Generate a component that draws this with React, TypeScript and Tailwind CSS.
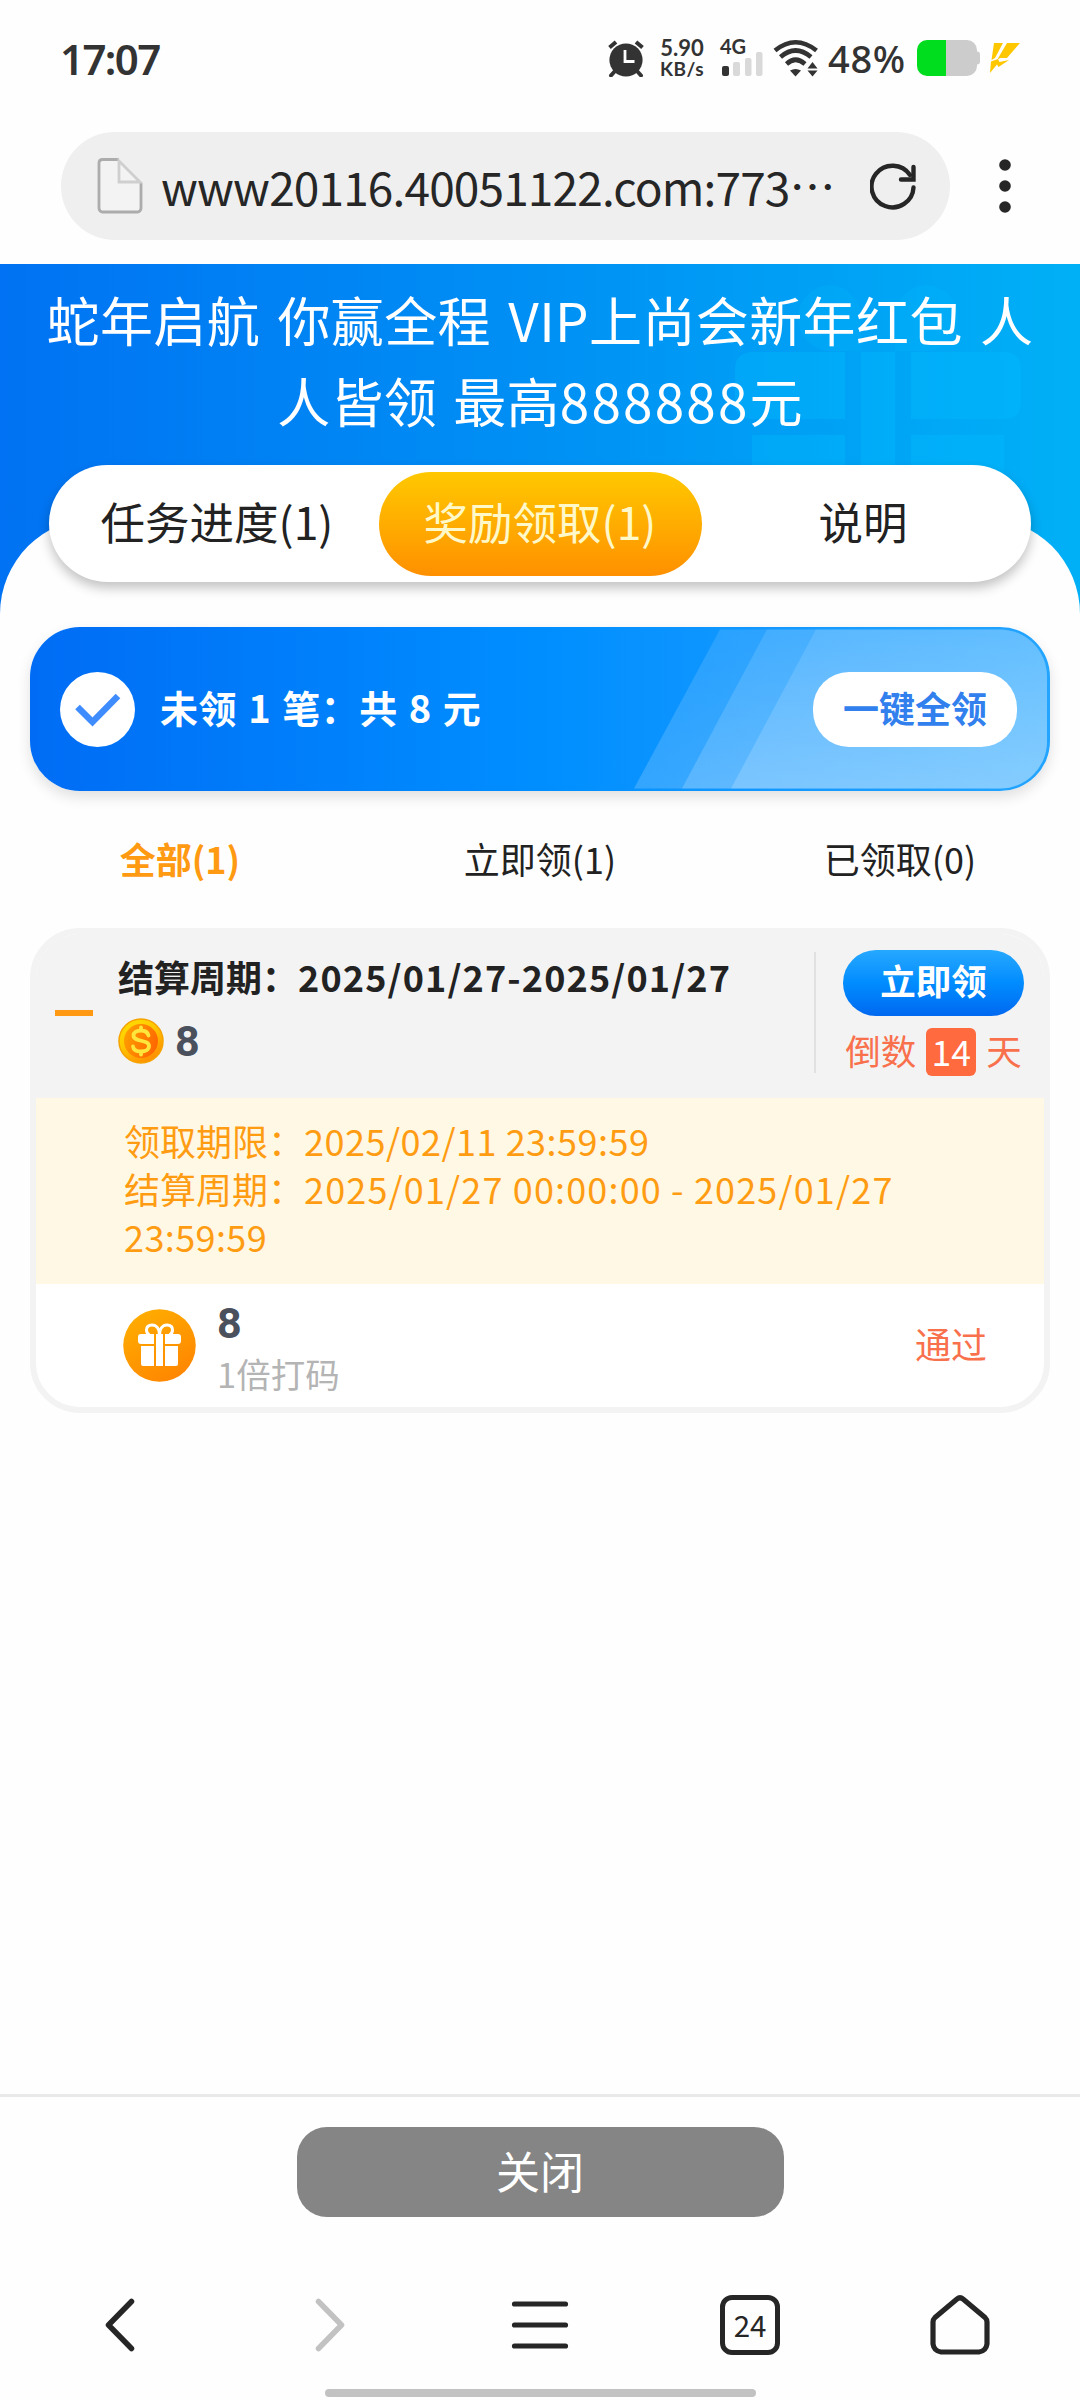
import { useState } from 'react'

interface Reward {
  id: number
  period: string
  amount: number
  daysLeft: number
  deadline: string
  periodStart: string
  periodEnd: string
  turnover: string
  status: string
}

const tabs = ['任务进度(1)', '奖励领取(1)', '说明']
const filters = ['全部(1)', '立即领(1)', '已领取(0)']

const rewards: Reward[] = [
  {
    id: 1,
    period: '2025/01/27-2025/01/27',
    amount: 8,
    daysLeft: 14,
    deadline: '2025/02/11 23:59:59',
    periodStart: '2025/01/27 00:00:00 - 2025/01/27',
    periodEnd: '23:59:59',
    turnover: '1倍打码',
    status: '通过'
  }
]

function StatusIcons() {
  return (
    <div className="flex items-center h-[44px] text-[#333]">
      {/* Alarm */}
      <svg width="38" height="38" viewBox="0 0 38 38" fill="none" stroke="currentColor">
        <circle cx="19" cy="21" r="16.6" fill="currentColor" stroke="none" />
        <path d="M2.5 8.5 9 3M35.500 8.500 29 3" strokeWidth="4" />
        <path d="m8 32-4 4.500M30 32l4 4.500" strokeWidth="4" strokeLinecap="round" />
        <path d="M18 11v11.500h9.500" stroke="#fff" strokeWidth="2.800" />
      </svg>
      <div className="ml-[14px] w-[46px] font-['Lato',sans-serif] font-bold text-center whitespace-nowrap">
        <div className="text-[22px] leading-[21px]">5.90</div>
        <div className="text-[19px] leading-[21px] tracking-[0.5px]">KB/s</div>
      </div>
      {/* Signal */}
      <svg className="ml-[14px]" width="46" height="52" viewBox="-1 -6 46 52">
        <text x="0" y="16" fontSize="20" fontWeight="700" fontFamily="Lato, sans-serif" fill="#333">4G</text>
        <rect x="2" y="28" width="7" height="10" rx="2" fill="#333" />
        <rect x="13" y="24" width="7" height="14" rx="2" fill="#d9d9d9" />
        <rect x="25" y="20" width="6.500" height="18" rx="2" fill="#d9d9d9" />
        <rect x="36" y="14" width="6.500" height="24" rx="2" fill="#d9d9d9" />
      </svg>
      {/* Wifi */}
      <svg className="ml-[8px]" width="46" height="40" viewBox="0 0 46 40" fill="none" stroke="#333">
        <path d="M2 12.500Q22.500-4 43.500 12.500M7.500 19Q22.500 6 38 19M13.500 26Q22.500 17.500 32 26" strokeWidth="4.600" />
        <path d="M22.500 38.500 17 32.500Q22.500 29.500 28 32.500Z" fill="#333" stroke="none" />
        <path d="m34.500 30.500 5-6.500 5 6.500ZM34.500 32.500l5 6 5-6Z" fill="#333" stroke="none" />
      </svg>
      <span className="ml-[9px] w-[81px] font-['Noto_Sans',sans-serif] font-medium text-[38px] leading-[44px] tracking-[0.7px]">48%</span>
      {/* Battery */}
      <svg className="ml-[8px]" width="64" height="38" viewBox="0 0 64 38">
        <path d="M10 1h40a10 10 0 0 1 10 10v1.500q3 0 3 3v7q0 3-3 3V27a10 10 0 0 1-10 10H29V1Z" fill="#ccc" />
        <path d="M10 1h19v36H10A10 10 0 0 1 0 27V11A10 10 0 0 1 10 1Z" fill="#00dc1e" />
      </svg>
      <svg className="ml-[8px]" width="32" height="32" viewBox="0 0 32 32" fill="#ffc700">
        <path d="M5 1h9L6 16l-3.500 2ZM18 1h13L18 16h-7l-3 2ZM2 19.500 9 17l1.500 3L20 18 9.500 25 8 22.500 1 31Z" />
      </svg>
    </div>
  )
}

function HeaderGift() {
  return (
    <svg className="absolute left-[735px] top-[20px]" width="290" height="190" viewBox="0 0 290 190" fill="#00c0ff" fillOpacity="0.3">
      <path d="M0 85q0-16 17-17h93v67H17Q0 135 0 118ZM126 68h34v122h-34ZM176 68h93q17 0 17 17v33q0 17-17 17h-93ZM17 151h93v39H17ZM176 151h93v39h-93Z" />
      <path d="M96 1a33 33 0 0 1 30 33v33H96a33 33 0 0 1 0-66ZM190 1a33 33 0 0 1 0 66h-30V34A33 33 0 0 1 190 1Z" fillOpacity="0.16" />
    </svg>
  )
}

function CoinIcon() {
  return (
    <svg width="46" height="46" viewBox="0 0 46 46">
      <defs>
        <linearGradient id="coin-rim" x1="0" y1="0" x2="0.6" y2="1">
          <stop offset="0" stopColor="#ffe100" />
          <stop offset="0.5" stopColor="#ffc800" />
          <stop offset="1" stopColor="#ff9000" />
        </linearGradient>
        <linearGradient id="coin-face" x1="0" y1="0" x2="1" y2="0.4">
          <stop offset="0" stopColor="#ffa400" />
          <stop offset="1" stopColor="#ff6a00" />
        </linearGradient>
      </defs>
      <circle cx="23" cy="23" r="22" fill="url(#coin-rim)" stroke="#f5a300" strokeWidth="1.500" />
      <circle cx="23" cy="23" r="17" fill="url(#coin-face)" />
      <path
        d="M30.500 17.500c-1-3.500-4-5-7.500-5-4.500 0-7.500 2-7.500 5 0 7 15.500 3.500 15.500 10.500 0 3.500-3.500 5.500-8 5.500s-7.500-1.500-8-5M23 9.500v3M23 34v2.500"
        fill="none"
        stroke="#ffe63c"
        strokeWidth="3.800"
        strokeLinecap="round"
      />
    </svg>
  )
}

function GiftIcon() {
  return (
    <svg width="73" height="73" viewBox="0 0 73 73">
      <defs>
        <linearGradient id="gift-bg" x1="0.2" y1="0" x2="0.8" y2="1">
          <stop offset="0" stopColor="#ffae00" />
          <stop offset="1" stopColor="#ff8400" />
        </linearGradient>
      </defs>
      <circle cx="36.500" cy="36.500" r="36.250" fill="url(#gift-bg)" />
      <g fill="#fff">
        <path d="M18 25h13v10H18q-3 0-3-3v-4q0-3 3-3ZM42 25h13q3 0 3 3v4q0 3-3 3H42ZM18 37h13v20H20q-2 0-2-2ZM42 37h13v18q0 2-2 2H42ZM33 25h7v32h-7Z" />
      </g>
      <path
        d="M36.500 26c0-6-3-10-7.500-10-3.500 0-5.500 2-5.500 5 0 2 1 4 3 5M36.500 26c0-6 3-10 7.500-10 3.500 0 5.500 2 5.500 5 0 2-1 4-3 5"
        fill="none"
        stroke="#fff"
        strokeWidth="3"
      />
    </svg>
  )
}

function RewardCard({ reward }: { reward: Reward }) {
  return (
    <div className="mx-[30px] h-[485px] rounded-[50px] border-[6px] border-[#f3f3f3] overflow-hidden bg-white">
      <div className="flex h-[164px] bg-[#f3f3f3]">
        <div className="mt-[76px] ml-[19px] w-[38px] h-[6px] bg-[#ff9914]" />
        <div className="ml-[25px] w-[695px] pt-[15px]">
          <div className="flex h-[54px] items-center font-bold text-[36px] text-[#222] whitespace-nowrap">
            <span>结算周期：</span>
            <span className="tracking-[1.15px]">{reward.period}</span>
          </div>
          <div className="mt-[15px] flex items-center h-[46px]">
            <CoinIcon />
            <span className="ml-[11px] font-['Roboto',sans-serif] font-bold text-[43px] leading-[46px] text-[#4a505c]">
              {reward.amount}
            </span>
          </div>
        </div>
        <div className="mt-[18px] ml-[1px] w-[2px] h-[121px] bg-[#e1e1e1]" />
        <div className="ml-[27px] pt-[16px] w-[181px] flex flex-col items-center">
          <button className="w-[181px] h-[66px] rounded-full bg-gradient-to-b from-[#25a8ff] via-[#008cff] to-[#0068f0] text-white font-bold text-[35.5px] leading-[58px] pb-[6px]">
            立即领
          </button>
          <div className="mt-[10px] flex items-center text-[35.5px] leading-[48px] text-[#f9704c] whitespace-nowrap">
            <span className="pb-[4px]">倒数</span>
            <span className="mx-[10px] w-[50px] h-[48px] rounded-[6px] bg-[#ff6a3f] text-white text-center leading-[45px]">
              {reward.daysLeft}
            </span>
            <span className="pb-[4px]">天</span>
          </div>
        </div>
      </div>

      <div className="h-[186px] pl-[88px] pt-[18px] bg-[#fff8e5] text-[#ff9c12] text-[36px] leading-[48px] whitespace-nowrap">
        <p>领取期限：<span className="tracking-[0.5px]">{reward.deadline}</span></p>
        <p>结算周期：<span className="tracking-[1.15px]">{reward.periodStart}</span></p>
        <p className="tracking-[0.4px]">{reward.periodEnd}</p>
      </div>

      <div className="flex items-center h-[123px] pl-[87px] pr-[57px]">
        <GiftIcon />
        <div className="ml-[21px] flex-1">
          <div className="pt-[4px] font-['Roboto',sans-serif] font-bold text-[43px] leading-[50px] text-[#4a505c]">{reward.amount}</div>
          <div className="text-[34.5px] leading-[50px] text-[#b4b4b4]">{reward.turnover}</div>
        </div>
        <span className="pb-[5px] text-[36px] text-[#f9704c]">{reward.status}</span>
      </div>
    </div>
  )
}

export default function App() {
  const [activeTab, setActiveTab] = useState(1)
  const [activeFilter, setActiveFilter] = useState(0)

  return (
    <div className="flex flex-col w-[1080px] h-[2400px] bg-[#fefefe] overflow-hidden font-['Noto_Sans_CJK_SC',sans-serif] text-[#222]">
      {/* Status bar */}
      <div className="flex items-center justify-between h-[116px] pl-[60px] pr-[59px]">
        <span className="font-['Noto_Sans',sans-serif] font-semibold text-[42px] tracking-[-1.6px] text-[#333]">17:07</span>
        <StatusIcons />
      </div>

      {/* Address bar */}
      <div className="flex items-center h-[148px] pl-[61px] pb-[8px]">
        <div className="flex items-center w-[889px] h-[108px] rounded-full bg-[#efefef] pl-[36px]">
          <svg width="46" height="56" viewBox="0 0 46 56" fill="none" stroke="#acacac" strokeWidth="2.800">
            <path d="M22 1.500H5Q2 2 2 5v45q0 3 3 4h36q3-1 3-4V25Z" fill="#f3f3f3" stroke="none" />
            <path d="M22 1.500H5Q2 2 2 5v45q0 3 3 4h36q3-1 3-4V25" />
            <path d="M22 3v21h21Z" stroke="#cfcfcf" />
          </svg>
          <span className="ml-[18px] w-[690px] text-[46px] tracking-[-0.85px] text-[#262626] whitespace-nowrap">
            www20116.40051122.com:773<span className="inline-block -translate-y-[2px]">…</span>
          </span>
          <svg className="ml-[19px]" width="48" height="48" viewBox="0 0 48 48" fill="none" stroke="#262626" strokeWidth="4.400" strokeLinecap="round">
            <path d="M43.500 25.500A21 20.800 0 1 1 40 13" />
            <path d="M43.500 5v12.500H31" />
          </svg>
        </div>
        <svg className="ml-[48px]" width="14" height="56" viewBox="0 0 14 56" fill="#262626">
          <circle cx="7" cy="7" r="5.800" />
          <circle cx="7" cy="28" r="5.800" />
          <circle cx="7" cy="49" r="5.800" />
        </svg>
      </div>

      {/* Activity header */}
      <div className="relative h-[363px] bg-gradient-to-r from-[#0072f3] via-[#0090f4] to-[#00b0f6]">
        <HeaderGift />
        <div className="absolute inset-x-0 bottom-0 h-[109px] rounded-t-[96px] bg-[#fefefe]" />
        <h1 className="relative pt-[15px] text-center text-[53px] leading-[81px] text-white whitespace-nowrap">
          <span className="block tracking-[0.4px] [word-spacing:5px]">蛇年启航 你赢全程 VIP上尚会新年红包 人</span>
          <span className="block tracking-[0.3px] [word-spacing:4px]">人皆领 最高<span className="tracking-[2.2px]">888888</span>元</span>
        </h1>
        <div className="relative mx-[49px] mt-[24px] grid grid-cols-3 h-[117px] p-[6.500px] rounded-full bg-white shadow-[0_6px_12px_rgba(0,0,0,0.24)]">
          {tabs.map((tab, index) => (
            <button
              key={tab}
              onClick={() => setActiveTab(index)}
              className={`rounded-full text-[44.5px] pb-[4px] ${
                activeTab === index
                  ? 'bg-gradient-to-b from-[#ffc800] to-[#ff9000] text-[#fff8c8]'
                  : 'text-[#222]'
              }`}
            >
              {tab}
            </button>
          ))}
        </div>
      </div>

      {/* Claim all banner */}
      <div className="relative mx-[30px] flex items-center h-[164px] rounded-[50px] bg-gradient-to-r from-[#006cf5] via-[#008eff] to-[#22a4ff] pl-[30px] pr-[33px] shadow-[0_6px_14px_rgba(0,0,0,0.12)]">
        <svg className="absolute left-0 top-0" width="1020" height="164" viewBox="0 0 1020 164">
          <defs>
            <linearGradient id="stripe" x1="0" y1="0" x2="0" y2="1">
              <stop offset="0" stopColor="#fff" stopOpacity="0.11" />
              <stop offset="1" stopColor="#fff" stopOpacity="0.18" />
            </linearGradient>
          </defs>
          <g fill="url(#stripe)">
            <path d="M690 2.500H970a47 47 0 0 1 47 47v65a47 47 0 0 1-47 47H604Z" />
            <path d="M737 2.500H970a47 47 0 0 1 47 47v65a47 47 0 0 1-47 47H652Z" />
            <path d="M786 2.500H970a47 47 0 0 1 47 47v65a47 47 0 0 1-47 47H701Z" />
          </g>
        </svg>
        <svg className="relative" width="75" height="75" viewBox="0 0 75 75">
          <circle cx="37.500" cy="37.500" r="37.500" fill="#fff" />
          <path d="m17.500 35 15 15L58 24" fill="none" stroke="#3f8cff" strokeWidth="6.500" />
        </svg>
        <span className="relative ml-[25px] flex-1 pb-[5px] text-white font-bold text-[38px] tracking-[0.5px] [word-spacing:2px]">未领 1 笔：共 8 元</span>
        <button className="relative w-[204px] h-[75px] rounded-[36px] bg-white text-[#3180ee] font-bold text-[36px] pb-[4px]">
          一键全领
        </button>
      </div>

      {/* Filters */}
      <div className="grid grid-cols-3 h-[137px] pb-[3px] text-[36px]">
        {filters.map((filter, index) => (
          <button
            key={filter}
            onClick={() => setActiveFilter(index)}
            className={activeFilter === index ? 'font-bold text-[#ff9a12]' : 'text-[#222]'}
          >
            {filter}
          </button>
        ))}
      </div>

      {rewards.map(reward => (
        <RewardCard key={reward.id} reward={reward} />
      ))}

      {/* Footer */}
      <div className="mt-auto h-[306px] border-t-[3px] border-[#e9e9e9]">
        <button className="block mx-auto mt-[30px] w-[487px] h-[90px] rounded-[30px] bg-[#858585] text-white text-[44px] pb-[4px]">
          关闭
        </button>
        <nav className="mt-[77px] h-[62px] flex items-center justify-between px-[90px]">
          <svg width="60" height="60" viewBox="0 0 60 60" fill="none" stroke="#262626" strokeWidth="5.500" strokeLinecap="round" strokeLinejoin="round">
            <path d="M41.500 6.500 18.500 30l23 23.500" />
          </svg>
          <svg width="60" height="60" viewBox="0 0 60 60" fill="none" stroke="#c2c2c2" strokeWidth="5.500" strokeLinecap="round" strokeLinejoin="round">
            <path d="M18.500 6.500 41.500 30l-23 23.500" />
          </svg>
          <svg width="60" height="60" viewBox="0 0 60 60" fill="none" stroke="#262626" strokeWidth="5.200" strokeLinecap="round">
            <path d="M4.500 9h51M4.500 30h51M4.500 51h51" />
          </svg>
          <div className="w-[60px] h-[60px] rounded-[12px] border-[5px] border-[#262626] text-[29.5px] leading-[49px] text-center text-[#262626]">
            24
          </div>
          <svg width="60" height="60" viewBox="0 0 60 60" fill="none" stroke="#262626" strokeWidth="5.200" strokeLinejoin="round">
            <path d="M3 27q0-2.500 2-4.500L27 4q3-2.500 6 0l22 18.500q2 2 2 4.500v22q-1 7-8 8H11q-7-1-8-8Z" />
          </svg>
        </nav>
        <div className="mt-[33px] mx-auto w-[431px] h-[8px] rounded-full bg-[#c2c2c2]" />
      </div>
    </div>
  )
}
